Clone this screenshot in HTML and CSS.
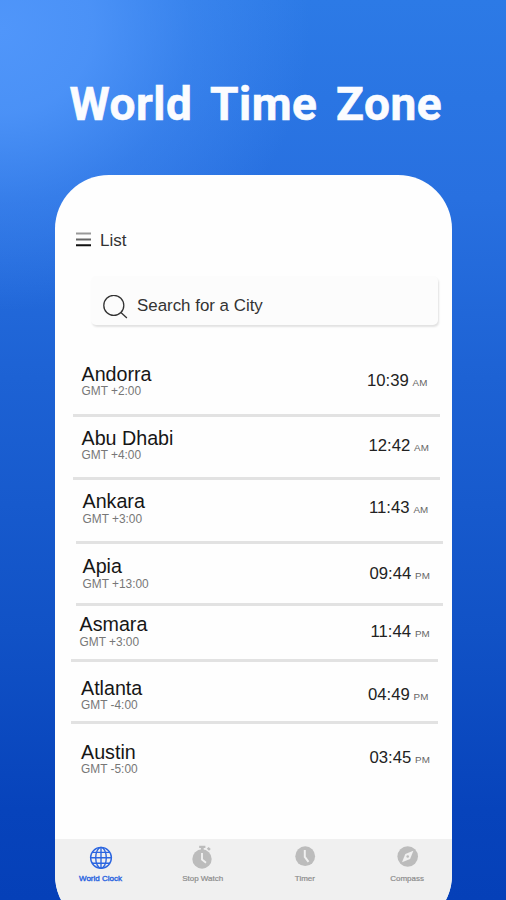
FILE: index.html
```html
<!DOCTYPE html>
<html lang="en">
<head>
<meta charset="utf-8">
<title>World Time Zone</title>
<link rel="stylesheet" href="styles.css">
</head>
<body>
<main class="stage">
  <h1 class="title">World Time Zone</h1>
  <section class="phone">
    <header class="bar">
      <svg class="menu" width="15" height="15" viewBox="0 0 15 15"><path d="M0 1.5h15" stroke="#999" stroke-width="2"/><path d="M0 7.4h15" stroke="#666" stroke-width="2"/><path d="M0 13.2h15" stroke="#111" stroke-width="2"/></svg>
      <span>List</span>
    </header>
    <div class="search">
      <svg width="26" height="26" viewBox="0 0 26 26" fill="none" stroke="#333" stroke-width="1.3"><circle cx="10.8" cy="10.4" r="10"/><path d="M17.9 17.5l6 5.6"/></svg>
      <span>Search for a City</span>
    </div>
    <ul class="list">
      <li class="row"><div class="place"><b>Andorra</b><small>GMT +2:00</small></div><div class="time">10:39 <i>AM</i></div></li>
      <li class="row"><div class="place"><b>Abu Dhabi</b><small>GMT +4:00</small></div><div class="time">12:42 <i>AM</i></div></li>
      <li class="row"><div class="place"><b>Ankara</b><small>GMT +3:00</small></div><div class="time">11:43 <i>AM</i></div></li>
      <li class="row"><div class="place"><b>Apia</b><small>GMT +13:00</small></div><div class="time">09:44 <i>PM</i></div></li>
      <li class="row"><div class="place"><b>Asmara</b><small>GMT +3:00</small></div><div class="time">11:44 <i>PM</i></div></li>
      <li class="row"><div class="place"><b>Atlanta</b><small>GMT -4:00</small></div><div class="time">04:49 <i>PM</i></div></li>
      <li class="row"><div class="place"><b>Austin</b><small>GMT -5:00</small></div><div class="time">03:45 <i>PM</i></div></li>
    </ul>
    <nav class="tabs">
      <a class="tab active">
        <svg width="24" height="26" viewBox="0 0 24 26" fill="none" stroke="#2c66e0" stroke-width="1.4"><circle cx="12" cy="12.8" r="10.4"/><ellipse cx="12" cy="12.8" rx="5.3" ry="10.4"/><path d="M12 2.4v20.8M1.6 12.8h20.8M3.2 7.4h17.6M3.2 18.2h17.6"/></svg>
        <span>World Clock</span>
      </a>
      <a class="tab">
        <svg width="24" height="26" viewBox="0 0 24 26"><circle cx="11" cy="14" r="9.7" fill="#bcbcbc"/><path d="M8.2 .8h6.2v2.2h-1.7v2H9.9v-2H8.2zM15.8 3.8l1.8-1.9 2.2 2-1.8 1.9z" fill="#bcbcbc"/><path d="M11 8v6.5l4 3.2" fill="none" stroke="#f0f0f0" stroke-width="1.9"/></svg>
        <span>Stop Watch</span>
      </a>
      <a class="tab">
        <svg width="24" height="26" viewBox="0 0 24 26"><circle cx="12.2" cy="11.2" r="9.9" fill="#bcbcbc"/><path d="M11.8 5v6.9l3.7 5" fill="none" stroke="#f0f0f0" stroke-width="2"/></svg>
        <span>Timer</span>
      </a>
      <a class="tab">
        <svg width="24" height="26" viewBox="0 0 24 26"><circle cx="12.7" cy="11.5" r="10.3" fill="#bcbcbc"/><path d="M18.4 5.8l-3.3 8.1-8.1 3.3 3.3-8.1z" fill="#f0f0f0"/><circle cx="12.7" cy="11.5" r="1.3" fill="#bcbcbc"/></svg>
        <span>Compass</span>
      </a>
    </nav>
  </section>
</main>
</body>
</html>
```

FILE: styles.css
```css
* { box-sizing: border-box; }

body {
  margin: 0;
  font-family: "Liberation Sans", Arial, sans-serif;
}

.stage {
  height: 900px;
  overflow: hidden;
  background:
    radial-gradient(ellipse 310px 280px at 0 30px, #5096fa 0%, rgba(80, 150, 250, 0.85) 30%, rgba(80, 150, 250, 0.35) 62%, rgba(80, 150, 250, 0) 100%),
    linear-gradient(180deg, #2c7ae6 0%, #2870e0 22%, #1d62d4 42%, #1152c6 70%, #0743bb 90%, #0540b8 100%);
}

.title {
  margin: 0;
  padding: 77px 0 0 69.5px;
  height: 174.5px;
  font: 700 46px/54px Roboto, sans-serif;
  letter-spacing: 0.5px;
  word-spacing: 6.8px;
  white-space: nowrap;
  color: #fbfcff;
  -webkit-text-stroke: 0.6px #fbfcff;
}

.phone {
  display: flex;
  flex-direction: column;
  width: 397px;
  height: 754px;
  margin-left: 55px;
  border-radius: 54px;
  overflow: hidden;
  background: #fefefe;
}

.bar {
  display: flex;
  gap: 9px;
  height: 101.5px;
  padding: 56.5px 0 0 21px;
  font-size: 17px;
  line-height: 19px;
  color: #333;
}

.menu { margin-top: 0.5px; }

.search {
  display: flex;
  gap: 9px;
  width: 347px;
  height: 49px;
  margin-left: 36px;
  padding: 18px 0 0 11px;
  border-radius: 5px;
  background: #fcfcfc;
  box-shadow: 1px 2px 2px #e2e2e2;
  font-size: 16.9px;
  line-height: 23px;
  color: #333;
}

.search svg { margin: 0.5px -1px 0 1px; }

.list {
  height: 514px;
  margin: 0;
  padding: 28px 0 0;
  list-style: none;
}

.row {
  --h: 64px;
  --x: 18px;
  --name-x: 8.5px;
  --name-y: 10.5px;
  --time-x: 294px;
  --time-y: 18px;
  display: grid;
  grid-template-columns: var(--time-x) 1fr;
  width: 367px;
  height: var(--h);
  margin-left: var(--x);
  border-bottom: 3px solid #e2e2e2;
}

.row:nth-child(2) { --h: 63px; --time-x: 295.5px; --time-y: 18.5px; }
.row:nth-child(3) { --x: 21px; --name-x: 6.5px; --time-x: 293px; --name-y: 11px; }
.row:nth-child(4) { --h: 62px; --x: 21px; --name-x: 6.5px; --name-y: 12px; --time-x: 293.5px; --time-y: 20px; }
.row:nth-child(5) { --h: 56px; --x: 16px; --name-x: 8.5px; --name-y: 8px; --time-x: 299.5px; --time-y: 16px; }
.row:nth-child(6) { --h: 62px; --x: 16px; --name-x: 10px; --name-y: 15.5px; --time-x: 297px; --time-y: 23px; }
.row:nth-child(7) { --h: 62px; --x: 16px; --name-x: 10px; --name-y: 17.5px; --time-x: 298.5px; --time-y: 24px; border: 0; }

.place {
  display: flex;
  flex-direction: column;
  padding: var(--name-y) 0 0 var(--name-x);
}

.place b {
  font-weight: 400;
  font-size: 19.7px;
  line-height: 20px;
  color: #161616;
}

.place small {
  margin-top: 1.6px;
  font-size: 11.9px;
  line-height: 12px;
  color: #777;
}

.time {
  padding-top: var(--time-y);
  font-size: 16.7px;
  line-height: 20px;
  white-space: nowrap;
  color: #222;
}

.time i {
  font-style: normal;
  font-size: 9.8px;
  margin-left: -0.8px;
  color: #666;
}

.tabs {
  display: grid;
  grid-template-columns: repeat(4, 102.2px);
  flex: 1;
  margin: 0;
  padding-top: 6px;
  background: #f0f0f0;
}

.tab {
  display: flex;
  flex-direction: column;
  align-items: center;
  width: 91px;
  gap: 3px;
  font-size: 8px;
  line-height: 9px;
  color: #8c8c8c;
  -webkit-text-stroke: 0.2px currentColor;
}

.tab.active {
  color: #2c66e0;
  -webkit-text-stroke: 0.4px currentColor;
}
```
